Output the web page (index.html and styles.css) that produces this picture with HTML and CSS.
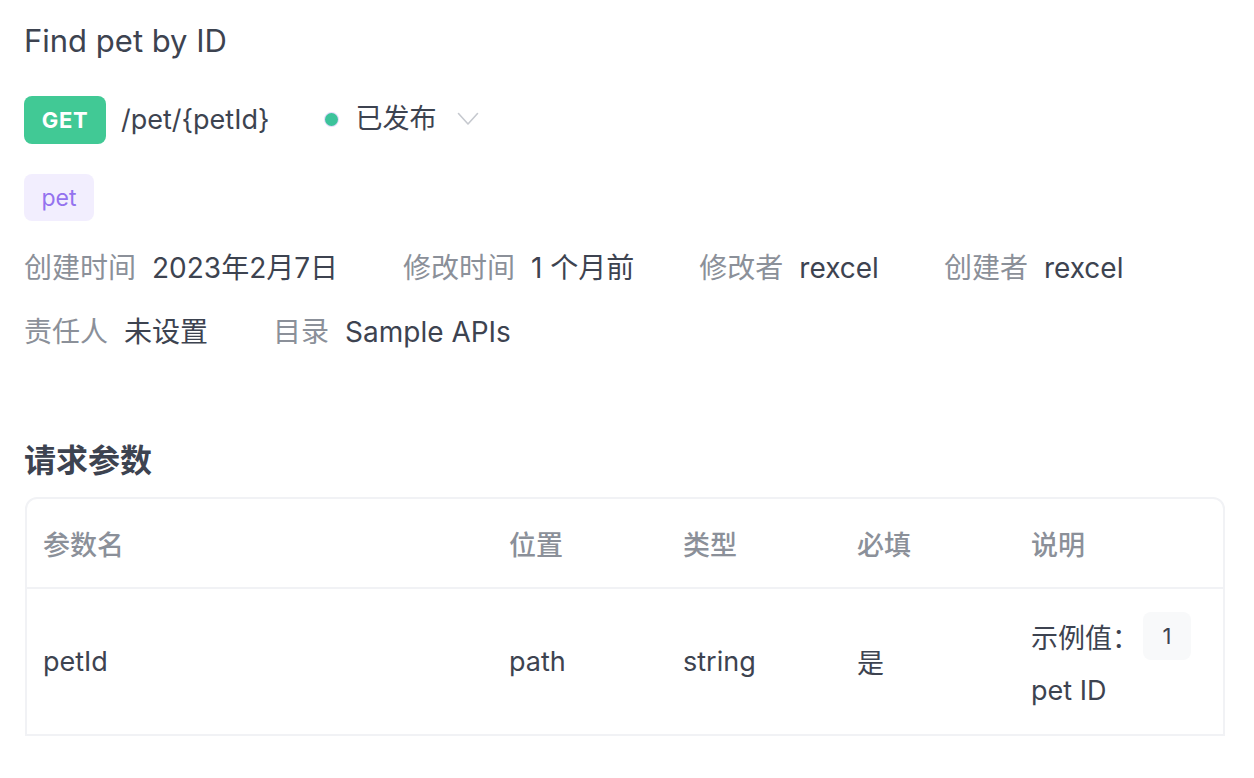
FILE: index.html
```html
<!DOCTYPE html>
<html lang="zh-CN">
<head>
<meta charset="utf-8">
<title>Find pet by ID</title>
<link rel="stylesheet" href="styles.css">
</head>
<body>
<main class="page">
  <h1 class="title">Find pet by ID</h1>

  <div class="method-row">
    <span class="method">GET</span>
    <span class="path">/pet/{petId}</span>
    <span class="status">
      <span class="dot"></span>
      <span class="status-text">已发布</span>
      <svg class="chevron" width="22" height="14" viewBox="0 0 22 14"><polyline points="1.5,1.5 11,12 20.5,1.5" fill="none" stroke="#c6c9cf" stroke-width="1.6" stroke-linecap="round" stroke-linejoin="round"/></svg>
    </span>
  </div>

  <div class="tags"><span class="tag">pet</span></div>

  <div class="meta">
    <span class="meta-item"><span class="label">创建时间</span><span class="value">2023年2月7日</span></span>
    <span class="meta-item"><span class="label">修改时间</span><span class="value">1 个月前</span></span>
    <span class="meta-item"><span class="label">修改者</span><span class="value">rexcel</span></span>
    <span class="meta-item"><span class="label">创建者</span><span class="value">rexcel</span></span>
  </div>
  <div class="meta">
    <span class="meta-item"><span class="label">责任人</span><span class="value">未设置</span></span>
    <span class="meta-item"><span class="label">目录</span><span class="value">Sample APIs</span></span>
  </div>

  <h2 class="section-title">请求参数</h2>

  <div class="table">
    <div class="tr th">
      <div class="cell">参数名</div>
      <div class="cell">位置</div>
      <div class="cell">类型</div>
      <div class="cell">必填</div>
      <div class="cell">说明</div>
    </div>
    <div class="tr td">
      <div class="cell">petId</div>
      <div class="cell">path</div>
      <div class="cell">string</div>
      <div class="cell">是</div>
      <div class="cell desc">
        <div class="example"><span>示例值：</span><span class="code">1</span></div>
        <div class="desc-text">pet ID</div>
      </div>
    </div>
  </div>
</main>
</body>
</html>
```

FILE: styles.css
```css
* { box-sizing: border-box; }
html, body { margin: 0; padding: 0; background: #ffffff; }
body {
  font-family: Inter, "Noto Sans CJK SC", sans-serif;
  color: #3d4350;
}
.page {
  padding: 21px 29px 0 24px;
}
.title {
  margin: 0;
  font-size: 31px;
  line-height: 40px;
  font-weight: 400;
  color: #3d4350;
}
.method-row {
  display: flex;
  align-items: center;
  height: 48px;
  margin-top: 35px;
}
.method {
  display: flex;
  align-items: center;
  justify-content: center;
  width: 82px;
  height: 48px;
  border-radius: 8px;
  background: #41c995;
  color: #ffffff;
  font-weight: 700;
  font-size: 22px;
  letter-spacing: 0.6px;
}
.path {
  margin-left: 15px;
  font-size: 27px;
  line-height: 40px;
  color: #3d4350;
}
.status {
  display: flex;
  align-items: center;
  margin-left: 56px;
}
.dot {
  width: 13px;
  height: 13px;
  border-radius: 50%;
  background: #3cc39b;
  box-shadow: 0 0 0 1px #e3dcfb;
  margin-top: -2px;
}
.status-text {
  margin-left: 17px;
  font-size: 27px;
  line-height: 40px;
  margin-top: -3px;
  color: #3d4350;
}
.chevron {
  margin-left: 21px;
  margin-top: -2px;
}
.tags {
  margin-top: 30px;
  display: flex;
}
.tag {
  display: flex;
  align-items: center;
  justify-content: center;
  width: 70px;
  height: 47px;
  border-radius: 8px;
  background: #f2eefe;
  color: #9472ef;
  font-size: 23px;
}
.meta {
  display: flex;
  margin-top: 27px;
  font-size: 28px;
  line-height: 40px;
}
.meta + .meta { margin-top: 24px; }
.meta-item {
  display: flex;
  margin-right: 65px;
}
.label {
  color: #8b9099;
  margin-right: 16px;
}
.value {
  color: #3d4350;
}
.section-title {
  margin: 87px 0 0 0;
  font-size: 32px;
  line-height: 44px;
  font-weight: 600;
  color: #3d4350;
}
.table {
  margin-top: 14px;
  margin-left: 1px;
  border: 2px solid #f1f2f5;
  border-radius: 12px 12px 0 0;
}
.tr {
  display: grid;
  grid-template-columns: 466px 174px 174px 174px 1fr;
}
.th {
  height: 90px;
  align-items: center;
  border-bottom: 2px solid #f1f2f5;
  color: #8b9099;
  font-size: 27px;
  font-weight: 500;
}
.td {
  height: 145px;
  align-items: center;
  font-size: 27px;
  color: #3d4350;
}
.cell {
  padding: 0 16px;
}
.desc {
  display: flex;
  flex-direction: column;
}
.example {
  display: flex;
  align-items: center;
  height: 48px;
}
.code {
  display: flex;
  align-items: center;
  justify-content: center;
  width: 48px;
  height: 48px;
  margin-left: 4px;
  border-radius: 8px;
  background: #f8f9fa;
  font-size: 22px;
}
.desc-text {
  margin-top: 11px;
  line-height: 40px;
}
```
